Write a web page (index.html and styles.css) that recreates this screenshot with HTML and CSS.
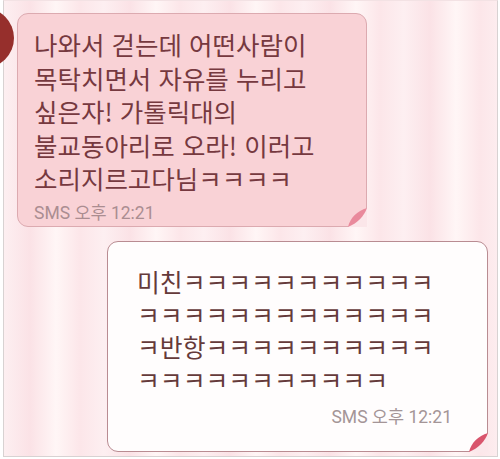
FILE: index.html
```html
<!DOCTYPE html>
<html lang="ko">
<head>
<meta charset="utf-8">
<link rel="stylesheet" href="styles.css">
</head>
<body>
<div class="frame">
  <div class="avatar"></div>
  <div class="bubble in">
    <p class="msg">나와서 걷는데 어떤사람이<br>목탁치면서 자유를 누리고<br>싶은자! 가톨릭대의<br>불교동아리로 오라! 이러고<br>소리지르고다님ㅋㅋㅋㅋ</p>
    <div class="meta">SMS 오후 12:21</div>
    <svg class="curl" width="20" height="20" viewBox="0 0 20 20">
      <path d="M1 20 L20 1 L20 20 Z" fill="#fbe6e9"/>
      <path d="M1 20 C3 11 10 4 20 1 C17 9 11 16 1 20 Z" fill="#e98a9c"/>
    </svg>
  </div>
  <div class="bubble out">
    <p class="msg">미친ㅋㅋㅋㅋㅋㅋㅋㅋㅋㅋㅋ<br>ㅋㅋㅋㅋㅋㅋㅋㅋㅋㅋㅋㅋㅋ<br>ㅋ반항ㅋㅋㅋㅋㅋㅋㅋㅋㅋㅋ<br>ㅋㅋㅋㅋㅋㅋㅋㅋㅋㅋㅋ</p>
    <div class="meta">SMS 오후 12:21</div>
    <svg class="curl" width="20" height="20" viewBox="0 0 20 20">
      <path d="M1 20 L20 1 L20 20 Z" fill="#fbe8eb"/>
      <path d="M1 20 C3 11 10 4 20 1 C17 9 11 16 1 20 Z" fill="#d9556d"/>
    </svg>
  </div>
</div>
</body>
</html>
```

FILE: styles.css
```css
html, body {
  margin: 0;
  padding: 0;
  background: #ffffff;
  overflow: hidden;
}

.frame {
  position: relative;
  box-sizing: border-box;
  width: 495px;
  height: 457px;
  margin-left: 3px;
  border: 1px solid #d8d2d2;
  border-top-color: #f3e2e4;
  padding: 12px 0 0 0;
  display: flex;
  flex-direction: column;
  align-items: flex-start;
  gap: 14px;
  background: repeating-linear-gradient(90deg,
    #fdeff1 0,
    #fbe2e6 26px,
    #fff6f6 52px,
    #fce6e9 76px,
    #fdeff1 100px);
  font-family: "Noto Sans CJK KR", "Noto Sans", sans-serif;
}

.avatar {
  position: absolute;
  left: -50px;
  top: 7px;
  width: 60px;
  height: 60px;
  border-radius: 50%;
  background: #962f2c;
}

.bubble {
  position: relative;
  box-sizing: border-box;
  border-radius: 11px;
  border-bottom-right-radius: 0;
}

.bubble.in {
  width: 350px;
  height: 214px;
  margin-left: 13px;
  padding: 13px 4px 0 16px;
  background: #f9d2d6;
  border: 1px solid #dcaab0;
}

.bubble.out {
  width: 381px;
  height: 211px;
  margin-left: 103px;
  padding: 23px 35px 0 29px;
  background: #fffdfd;
  border: 1px solid #b98c92;
}

.msg {
  margin: 0;
  color: #76393f;
  white-space: nowrap;
}

.in .msg {
  font-size: 25.5px;
  line-height: 33.5px;
}

.out .msg {
  font-size: 24.8px;
  line-height: 32.5px;
  color: #653a3a;
}

.meta {
  font-family: Roboto, "Noto Sans CJK KR", sans-serif;
  line-height: 20px;
  color: #ab8d91;
}

.in .meta {
  font-size: 17.5px;
  margin-top: 8px;
}

.out .meta {
  font-size: 17.5px;
  margin-top: 12px;
  text-align: right;
  color: #a49597;
}

.curl {
  position: absolute;
  right: -1px;
  bottom: -1px;
  display: block;
}
```
